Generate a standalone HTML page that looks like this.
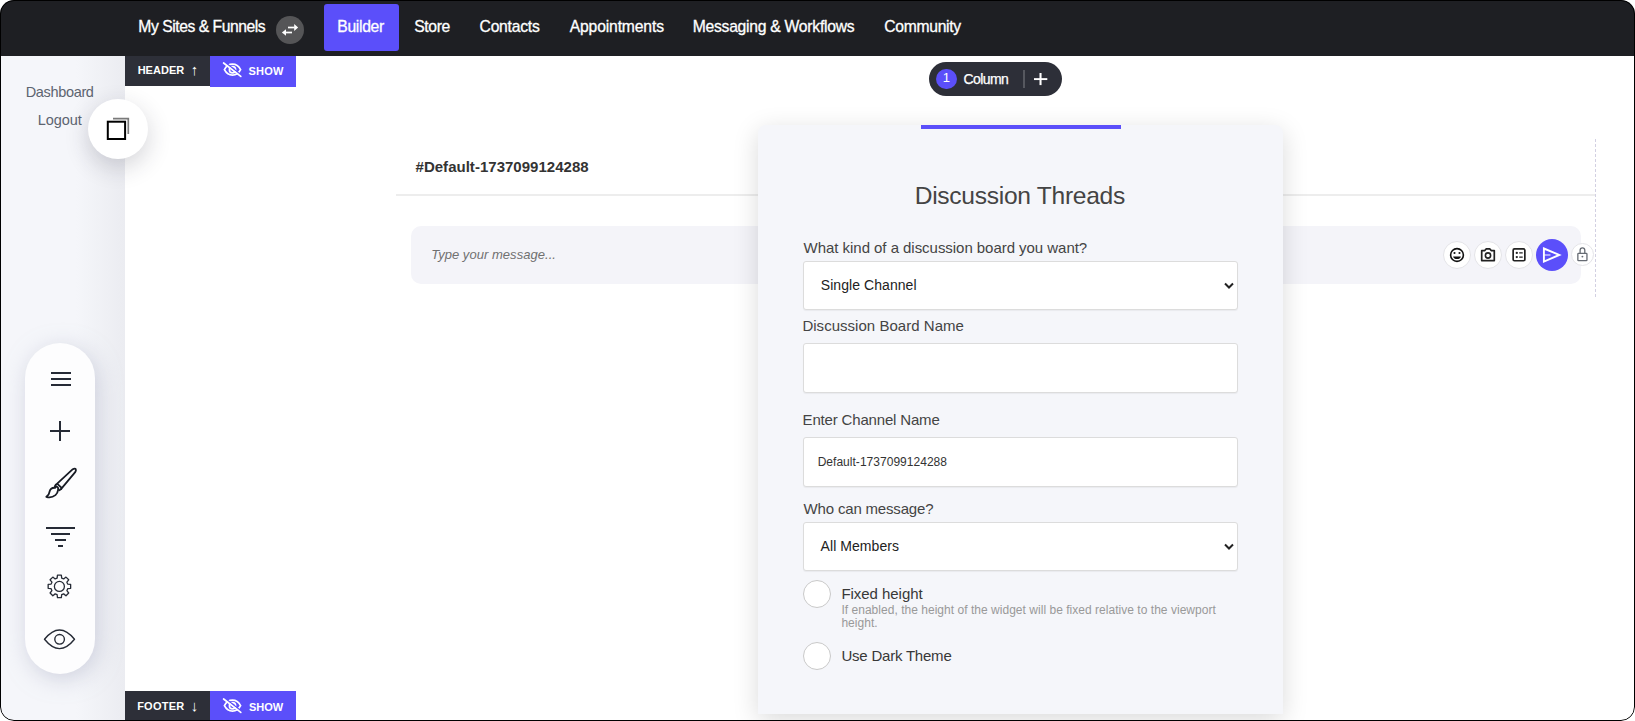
<!DOCTYPE html>
<html lang="en">
<head>
<meta charset="utf-8">
<title>Builder - Discussion Threads</title>
<style>
*{box-sizing:border-box;margin:0;padding:0}
html,body{width:1635px;height:721px;overflow:hidden;background:#fff}
body{font-family:"Liberation Sans",sans-serif;position:relative}
.frame{position:absolute;left:0;top:0;width:1635px;height:721px;border-radius:14px;overflow:hidden;background:#fff}
.frameb{position:absolute;left:0;top:0;width:1635px;height:721px;border:1px solid #000;border-radius:14px;pointer-events:none;z-index:50}
.abs{position:absolute}
.t{position:absolute;white-space:nowrap;line-height:1}
/* NAV */
.nav{position:absolute;left:0;top:0;width:1635px;height:56px;background:#1e1f23}
.nav .t{color:#fff;font-size:15.7px;-webkit-text-stroke:0.3px #fff}
.swap{position:absolute;left:276px;top:16px;width:28px;height:28px;border-radius:50%;background:#555557}
.builder{position:absolute;left:324px;top:4px;width:75px;height:47px;border-radius:3px;background:#5b4ffa}
/* SIDEBAR */
.side{position:absolute;left:0;top:56px;width:125px;height:665px;background:linear-gradient(to right,#f5f6fa 0,#f5f6fa 76px,#ebecf1 125px)}
.canvas{position:absolute;left:125px;top:56px;width:1510px;height:665px;background:#fff}
.side .t{color:#5d6470;font-size:14.5px}
.circ{position:absolute;left:88px;top:99px;width:60px;height:60px;border-radius:50%;background:#fff;box-shadow:0 8px 24px rgba(40,40,60,.2)}
.pill{position:absolute;left:25px;top:343px;width:70px;height:331px;border-radius:35px;background:#fdfdfe;box-shadow:3px 5px 22px rgba(170,174,196,.5)}
/* TAGS */
.tagd{position:absolute;background:#2d2f38}
.tagp{position:absolute;background:#5b4ffa}
.tag{color:#fff;font-weight:bold;font-size:11px}
/* column pill */
.colpill{position:absolute;left:929.4px;top:62px;width:133px;height:33.800px;border-radius:17px;background:#2d2f38}
/* message area */
.msgbox{position:absolute;left:411px;top:226px;width:1170px;height:58px;border-radius:10px;background:#f4f4f9}
.ib{position:absolute;border-radius:50%;background:#fff;border:1px solid #e4e4e8}
/* panel */
.panel{position:absolute;left:758px;top:124.5px;width:525px;height:589.5px;background:#f5f6fa;border-radius:8px 8px 0 0;box-shadow:0 6px 26px rgba(0,0,0,.15)}
.lbl{color:#444;font-size:15px}
.field{position:absolute;left:803px;width:435px;background:#fff;border:1px solid #dcdcdc;border-radius:3px;box-shadow:0 1px 1px rgba(0,0,0,.05)}
.chk{position:absolute;left:803px;width:28px;height:28px;border-radius:50%;background:#fff;border:1px solid #c9c9c9}
</style>
</head>
<body>
<div class="frame">

<!-- main canvas -->
<main class="canvas"></main>

<!-- sidebar -->
<aside class="side"></aside>

<!-- message area -->
<div class="abs" style="left:396px;top:194px;width:1199px;height:2px;background:#ededed"></div>
<div class="abs" style="left:1595px;top:139px;width:1px;height:160px;background:repeating-linear-gradient(to bottom,#d2d0e2 0,#d2d0e2 3px,transparent 3px,transparent 5px)"></div>
<div class="t" id="chan" style="left:415.56px;top:159px;font-size:15px;font-weight:bold;color:#333;letter-spacing:0.02px">#Default-1737099124288</div>
<div class="msgbox"></div>
<div class="t" id="ph" style="left:431.14px;top:248px;font-size:13px;font-style:italic;color:#707070;letter-spacing:0.04px">Type your message...</div>

<!-- message icons -->
<div class="ib" style="left:1443px;top:240.700px;width:28px;height:28px"></div>
<div class="ib" style="left:1474px;top:240.700px;width:28px;height:28px"></div>
<div class="ib" style="left:1505.100px;top:240.700px;width:28px;height:28px"></div>
<div class="abs" style="left:1536px;top:238.800px;width:32px;height:32px;border-radius:50%;background:#5b4ffa"></div>
<div class="ib" style="left:1571px;top:242.800px;width:23px;height:23px"></div>
<svg class="abs" style="left:1440px;top:235px" width="160" height="40" viewBox="1440 235 160 40" fill="none">
  <!-- smiley -->
  <circle cx="1457" cy="255" r="6.400" stroke="#111" stroke-width="1.600"/>
  <circle cx="1454.500" cy="253" r="1.050" fill="#111"/><circle cx="1459.500" cy="253" r="1.050" fill="#111"/>
  <path d="M1453.100 256.400h7.800q-0.700 2.700-3.900 2.700t-3.900-2.700z" fill="#111"/>
  <!-- camera -->
  <path d="M1481.700 250.600h3.100l1.300-1.700h3.800l1.300 1.700h3.100v10h-12.600z" stroke="#222" stroke-width="1.700" stroke-linejoin="round"/>
  <circle cx="1488" cy="255.500" r="2.600" stroke="#222" stroke-width="1.600"/>
  <!-- list -->
  <rect x="1513.150" y="248.950" width="11.700" height="11.800" rx="1.300" stroke="#222" stroke-width="1.700"/>
  <circle cx="1516.800" cy="252.900" r="1.150" fill="#222"/><circle cx="1516.800" cy="257.100" r="1.150" fill="#222"/>
  <path d="M1519.200 252.900h3.500M1519.200 257.100h3.500" stroke="#222" stroke-width="1.400"/>
  <!-- send -->
  <path d="M1543.900 248.500L1559.300 254.950L1543.900 261.500z" stroke="#fff" stroke-width="1.900" stroke-linejoin="miter"/>
  <path d="M1544 254.950h6.500" stroke="#fff" stroke-width="1.100"/>
  <!-- lock -->
  <rect x="1577.850" y="253.300" width="9.100" height="7.400" rx="0.700" stroke="#666b73" stroke-width="1.300"/>
  <path d="M1580.100 253.300v-3.100a2.350 2.350 0 0 1 4.700 0v3.100" stroke="#666b73" stroke-width="1.300"/>
  <circle cx="1582.400" cy="256.600" r="0.950" fill="#666b73"/>
</svg>

<!-- header / footer tags -->
<div class="tagd" style="left:125px;top:56px;width:85px;height:29.7px"></div>
<div class="tagp" style="left:210px;top:56px;width:86px;height:30.7px"></div>
<div class="t tag" id="hdr" style="left:137.65px;top:65px;letter-spacing:0.04px">HEADER</div>
<div class="t tag" id="hup" style="left:190.7px;top:61.5px;font-size:15px;font-weight:bold">↑</div>
<div class="t tag" id="sh1" style="left:248.58px;top:66px;letter-spacing:0.2px">SHOW</div>
<div class="tagd" style="left:125px;top:691px;width:85px;height:30px"></div>
<div class="tagp" style="left:210px;top:691px;width:86px;height:30px"></div>
<div class="t tag" id="ftr" style="left:137.14px;top:701px;letter-spacing:0.26px">FOOTER</div>
<div class="t tag" id="fdn" style="left:190.7px;top:697.5px;font-size:15px;font-weight:bold">↓</div>
<div class="t tag" id="sh2" style="left:249.04px;top:702px;letter-spacing:-0.02px">SHOW</div>
<svg class="abs" style="left:221px;top:60px" width="22" height="20" viewBox="0 0 22 20" fill="none" stroke="#fff" stroke-width="1.700" stroke-linecap="round">
  <path d="M3.400 9.700c1.900-3.600 4.700-5.500 8.100-5.500s6.200 1.900 8.100 5.500c-1.900 3.600-4.700 5.500-8.100 5.500s-6.200-1.900-8.100-5.500z"/>
  <circle cx="11.500" cy="9.700" r="3.100"/>
  <path d="M3.700 2.100l17.200 13.400" stroke="#5b4ffa" stroke-width="1.500"/>
  <path d="M2.600 3l17.200 13.400"/>
</svg>
<svg class="abs" style="left:221px;top:696px" width="22" height="20" viewBox="0 0 22 20" fill="none" stroke="#fff" stroke-width="1.700" stroke-linecap="round">
  <path d="M3.400 9.700c1.900-3.600 4.700-5.500 8.100-5.500s6.200 1.900 8.100 5.500c-1.900 3.600-4.700 5.500-8.100 5.500s-6.200-1.900-8.100-5.500z"/>
  <circle cx="11.500" cy="9.700" r="3.100"/>
  <path d="M3.700 2.100l17.200 13.400" stroke="#5b4ffa" stroke-width="1.500"/>
  <path d="M2.600 3l17.200 13.400"/>
</svg>

<!-- column pill -->
<div class="colpill"></div>
<div class="abs" style="left:936px;top:68.7px;width:20.500px;height:20.500px;border-radius:50%;background:#5b4ffa"></div>
<div class="t" id="one" style="left:942.8px;top:71px;font-size:13px;color:#fff">1</div>
<div class="t" id="col" style="left:963.52px;top:72.2px;font-size:14px;color:#fff;letter-spacing:-0.58px;-webkit-text-stroke:0.25px #fff">Column</div>
<div class="abs" style="left:1023px;top:70px;width:1.500px;height:17.5px;background:#56585f"></div>
<svg class="abs" style="left:1030px;top:69px" width="20" height="20" viewBox="1030 69 20 20" fill="#fff"><rect x="1034" y="78.150" width="13.300" height="1.900"/><rect x="1039.500" y="73" width="2.050" height="12.100"/></svg>

<!-- sidebar content -->
<div class="side-c">
<div class="t" id="dash" style="left:25.72px;top:85px;color:#5d6470;font-size:14.5px;letter-spacing:-0.34px">Dashboard</div>
<div class="t" id="logout" style="left:37.78px;top:113px;color:#5d6470;font-size:14.5px;letter-spacing:-0.09px">Logout</div>
</div>
<div class="pill"></div>
<svg class="abs" style="left:30px;top:343px" width="60" height="331" viewBox="30 344 60 331" fill="none" stroke="#262b36">
  <!-- hamburger -->
  <path d="M51 374h20M51 380h20M51 386h20" stroke-width="2"/>
  <!-- plus -->
  <path d="M50 432h20M60 422v20" stroke-width="2"/>
  <!-- brush -->
  <g transform="translate(30 456.600)" stroke="#171b24" stroke-width="1.800" stroke-linejoin="round" stroke-linecap="round">
    <path d="M25.800 29.200L42.800 13.600Q45 12.300 45.800 13.700Q46.300 15 45.200 16.600L31.200 33.300"/>
    <path d="M27.900 28.700L31.400 32.100"/>
    <path d="M25.800 29.200L24.800 30.600M31.200 33.300L29.300 34.600"/>
    <path d="M25.200 32.200Q20.500 31.800 19.500 36.200Q19 39.800 16.300 41.300Q21.500 42.800 25.400 39.500Q27.700 37.400 27.900 35Q29 32.500 27 31.200Q25.500 30.800 25.200 32.200z"/>
  </g>
  <!-- filter -->
  <path d="M46 529h29M51 535h19M55 541h11M58 547h5" stroke-width="2"/>
  <!-- gear -->
  <g transform="translate(59.400 587.400)" stroke-width="1.300" stroke-linejoin="round">
    <circle r="5"/>
    <path d="M-2.29 -8.29L-1.93 -11.24L1.93 -11.24L2.29 -8.29L4.24 -7.48L6.58 -9.31L9.31 -6.58L7.48 -4.24L8.29 -2.29L11.24 -1.93L11.24 1.93L8.29 2.29L7.48 4.24L9.31 6.58L6.58 9.31L4.24 7.48L2.29 8.29L1.93 11.24L-1.93 11.24L-2.29 8.29L-4.24 7.48L-6.58 9.31L-9.31 6.58L-7.48 4.24L-8.29 2.29L-11.24 1.93L-11.24 -1.93L-8.29 -2.29L-7.48 -4.24L-9.31 -6.58L-6.58 -9.31L-4.24 -7.48z"/>
  </g>
  <!-- eye -->
  <path d="M44.500 640.300Q52 631 59.500 631Q67 631 74.500 640.300Q67 649.600 59.500 649.600Q52 649.600 44.500 640.300z" stroke-width="1.400" stroke-linejoin="round"/>
  <circle cx="59.600" cy="640.300" r="4.800" stroke-width="1.400"/>
</svg>
<div class="circ"></div>
<svg class="abs" style="left:103px;top:114px" width="30" height="30" viewBox="0 0 30 30" fill="none">
  <path d="M10 4.700h15.300v15.400" stroke="#7a7a7a" stroke-width="1.700"/>
  <rect x="4.800" y="7.700" width="17.300" height="17.300" fill="#fff" stroke="#000" stroke-width="2"/>
</svg>

<!-- NAV -->
<nav class="nav">
  <div class="t" id="n0" style="left:138.34px;top:18.7px;letter-spacing:-0.46px">My Sites &amp; Funnels</div>
  <div class="swap"></div>
  <svg class="abs" style="left:276px;top:16px" width="28" height="28" viewBox="276 16 28 28" fill="#fff">
    <rect x="288" y="26.65" width="6.600" height="1.700"/><path d="M294.200 24L298.100 27.500L294.200 31z"/>
    <rect x="285.600" y="31.650" width="6.400" height="1.700"/><path d="M286 29.200L281.900 32.500L286 35.800z"/>
  </svg>
  <div class="builder"></div>
  <div class="t" id="n1" style="left:337.27px;top:18.7px;letter-spacing:-0.32px">Builder</div>
  <div class="t" id="n2" style="left:414.17px;top:18.7px;letter-spacing:-0.35px">Store</div>
  <div class="t" id="n3" style="left:479.56px;top:18.7px;letter-spacing:-0.24px">Contacts</div>
  <div class="t" id="n4" style="left:569.73px;top:18.7px;letter-spacing:-0.15px">Appointments</div>
  <div class="t" id="n5" style="left:692.7px;top:18.7px;letter-spacing:-0.26px">Messaging &amp; Workflows</div>
  <div class="t" id="n6" style="left:884.32px;top:18.7px;letter-spacing:-0.31px">Community</div>
</nav>

<!-- PANEL -->
<section class="panel"></section>
<div class="abs" style="left:921px;top:124.6px;width:200px;height:4.500px;background:#5b4ffa"></div>
<h2 class="t" id="ttl" style="left:914.7px;top:183.8px;font-size:24.6px;color:#444;letter-spacing:-0.29px;font-weight:normal">Discussion Threads</h2>

<label class="t lbl" id="l1" style="left:803.61px;top:240px;letter-spacing:-0.04px">What kind of a discussion board you want?</label>
<div class="field" style="top:261px;height:49px"></div>
<div class="t" id="s1" style="left:820.81px;top:278px;font-size:14px;color:#222;letter-spacing:0.06px">Single Channel</div>
<svg class="abs" style="left:1223.4px;top:281px" width="12" height="10" viewBox="0 0 12 10" fill="none" stroke="#222" stroke-width="2"><path d="M2 2.500l4 4 4-4"/></svg>

<label class="t lbl" id="l2" style="left:802.38px;top:318px;letter-spacing:0.03px">Discussion Board Name</label>
<div class="field" style="top:343px;height:50px"></div>

<label class="t lbl" id="l3" style="left:802.59px;top:412px;letter-spacing:-0.17px">Enter Channel Name</label>
<div class="field" style="top:437px;height:50px"></div>
<div class="t" id="v3" style="left:817.63px;top:456px;font-size:12px;color:#333;letter-spacing:0.03px">Default-1737099124288</div>

<label class="t lbl" id="l4" style="left:803.61px;top:501px;letter-spacing:-0.18px">Who can message?</label>
<div class="field" style="top:522px;height:49px"></div>
<div class="t" id="s4" style="left:820.55px;top:539px;font-size:14px;color:#222;letter-spacing:0.07px">All Members</div>
<svg class="abs" style="left:1223.4px;top:542px" width="12" height="10" viewBox="0 0 12 10" fill="none" stroke="#222" stroke-width="2"><path d="M2 2.500l4 4 4-4"/></svg>

<div class="chk" style="top:580px"></div>
<label class="t lbl" id="c1" style="left:841.38px;top:586px;letter-spacing:-0.04px;color:#383838">Fixed height</label>
<div class="t" id="c1a" style="left:841.4px;top:604px;font-size:12px;color:#999;letter-spacing:0.03px">If enabled, the height of the widget will be fixed relative to the viewport</div>
<div class="t" id="c1b" style="left:841.4px;top:617px;font-size:12px;color:#999;letter-spacing:0.03px">height.</div>
<div class="chk" style="top:642px"></div>
<label class="t lbl" id="c2" style="left:841.38px;top:648px;letter-spacing:-0.21px;color:#383838">Use Dark Theme</label>

<div class="frameb"></div>
</div>
</body>
</html>
